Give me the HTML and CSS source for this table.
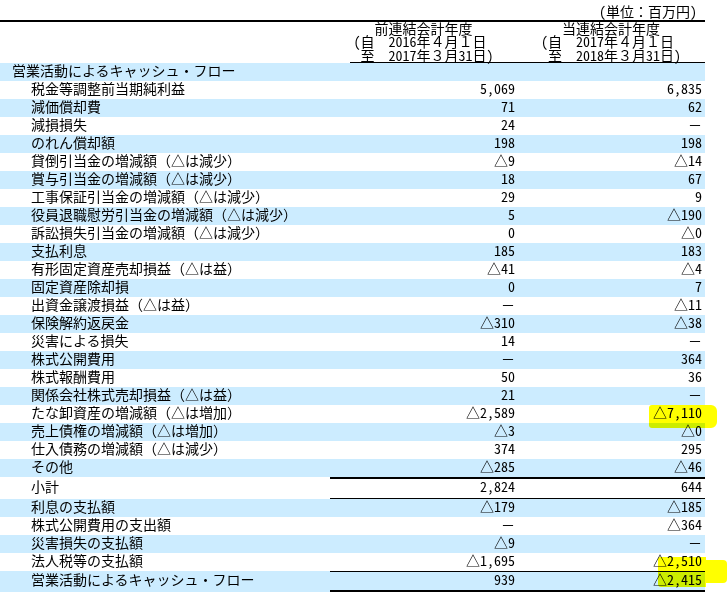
FILE: index.html
```html
<!DOCTYPE html>
<html lang="ja">
<head>
<meta charset="utf-8">
<title>連結キャッシュ・フロー計算書</title>
<link rel="stylesheet" href="styles.css">
</head>
<body>
<div class="page">
  <div class="unit"><span class="hw">(</span>単位：百万円<span class="hw">)</span></div>
  <div class="sheet">
    <div class="head">
      <div class="head-label"></div>
      <div class="head-col prev">
        <div class="period-title">前連結会計年度</div>
        <div class="period">
          <div><span class="hw">(</span>自　<span class="hw">2016</span>年４月１日</div>
          <div class="to">至　<span class="hw">2017</span>年３月<span class="hw">31</span>日<span class="hw">)</span></div>
        </div>
      </div>
      <div class="head-col curr">
        <div class="period-title">当連結会計年度</div>
        <div class="period">
          <div><span class="hw">(</span>自　<span class="hw">2017</span>年４月１日</div>
          <div class="to">至　<span class="hw">2018</span>年３月<span class="hw">31</span>日<span class="hw">)</span></div>
        </div>
      </div>
    </div>

    <div class="row blue section"><div class="label">営業活動によるキャッシュ・フロー</div><div class="num c1"></div><div class="num c2"></div></div>
    <div class="row"><div class="label">税金等調整前当期純利益</div><div class="num c1">5,069</div><div class="num c2">6,835</div></div>
    <div class="row blue"><div class="label">減価償却費</div><div class="num c1">71</div><div class="num c2">62</div></div>
    <div class="row"><div class="label">減損損失</div><div class="num c1">24</div><div class="num c2 dash">－</div></div>
    <div class="row blue"><div class="label">のれん償却額</div><div class="num c1">198</div><div class="num c2">198</div></div>
    <div class="row"><div class="label">貸倒引当金の増減額（△は減少）</div><div class="num c1">△9</div><div class="num c2">△14</div></div>
    <div class="row blue"><div class="label">賞与引当金の増減額（△は減少）</div><div class="num c1">18</div><div class="num c2">67</div></div>
    <div class="row"><div class="label">工事保証引当金の増減額（△は減少）</div><div class="num c1">29</div><div class="num c2">9</div></div>
    <div class="row blue"><div class="label">役員退職慰労引当金の増減額（△は減少）</div><div class="num c1">5</div><div class="num c2">△190</div></div>
    <div class="row"><div class="label">訴訟損失引当金の増減額（△は減少）</div><div class="num c1">0</div><div class="num c2">△0</div></div>
    <div class="row blue"><div class="label">支払利息</div><div class="num c1">185</div><div class="num c2">183</div></div>
    <div class="row"><div class="label">有形固定資産売却損益（△は益）</div><div class="num c1">△41</div><div class="num c2">△4</div></div>
    <div class="row blue"><div class="label">固定資産除却損</div><div class="num c1">0</div><div class="num c2">7</div></div>
    <div class="row"><div class="label">出資金譲渡損益（△は益）</div><div class="num c1 dash">－</div><div class="num c2">△11</div></div>
    <div class="row blue"><div class="label">保険解約返戻金</div><div class="num c1">△310</div><div class="num c2">△38</div></div>
    <div class="row"><div class="label">災害による損失</div><div class="num c1">14</div><div class="num c2 dash">－</div></div>
    <div class="row blue"><div class="label">株式公開費用</div><div class="num c1 dash">－</div><div class="num c2">364</div></div>
    <div class="row"><div class="label">株式報酬費用</div><div class="num c1">50</div><div class="num c2">36</div></div>
    <div class="row blue"><div class="label">関係会社株式売却損益（△は益）</div><div class="num c1">21</div><div class="num c2 dash">－</div></div>
    <div class="row"><div class="label">たな卸資産の増減額（△は増加）</div><div class="num c1">△2,589</div><div class="num c2">△7,110</div></div>
    <div class="row blue"><div class="label">売上債権の増減額（△は増加）</div><div class="num c1">△3</div><div class="num c2">△0</div></div>
    <div class="row"><div class="label">仕入債務の増減額（△は減少）</div><div class="num c1">374</div><div class="num c2">295</div></div>
    <div class="row blue"><div class="label">その他</div><div class="num c1">△285</div><div class="num c2">△46</div></div>
    <div class="row subtotal"><div class="label">小計</div><div class="num c1">2,824</div><div class="num c2">644</div></div>
    <div class="row blue"><div class="label">利息の支払額</div><div class="num c1">△179</div><div class="num c2">△185</div></div>
    <div class="row"><div class="label">株式公開費用の支出額</div><div class="num c1 dash">－</div><div class="num c2">△364</div></div>
    <div class="row blue"><div class="label">災害損失の支払額</div><div class="num c1">△9</div><div class="num c2 dash">－</div></div>
    <div class="row"><div class="label">法人税等の支払額</div><div class="num c1">△1,695</div><div class="num c2">△2,510</div></div>
    <div class="row blue total"><div class="label">営業活動によるキャッシュ・フロー</div><div class="num c1">939</div><div class="num c2">△2,415</div></div>
    <div class="row section"><div class="label">投資活動によるキャッシュ・フロー</div><div class="num c1"></div><div class="num c2"></div></div>
  </div>

  <div class="mark mark-a"></div>
  <div class="mark mark-b1"></div>
  <div class="mark mark-b2"></div>
</div>
</body>
</html>
```

FILE: styles.css
```css
html, body {
  margin: 0;
  padding: 0;
  overflow: hidden;
  background: #fff;
}

body {
  font-family: "Noto Sans CJK JP", "Noto Sans", sans-serif;
  font-size: 14px;
  color: #000;
}

*, *::before, *::after {
  box-sizing: border-box;
}

.page {
  position: relative;
  width: 727px;
}

.hw {
  font-feature-settings: "hwid" 1;
}

.unit {
  width: 705px;
  height: 20px;
  padding: 4px 8px 0 0;
  line-height: 14px;
  text-align: right;
}

.sheet {
  width: 705px;
  border-top: 2px solid #000;
}

/* header */
.head {
  display: grid;
  grid-template-columns: 330px 187px 188px;
  height: 41px;
}

.head-col {
  height: 41px;
  line-height: 13.3px;
  display: flex;
  flex-direction: column;
  align-items: center;
}

.head-col.curr {
  border-bottom: 1px solid #000;
}

.head-col.prev {
  background: linear-gradient(#000, #000) right bottom / calc(100% - 20px) 1px no-repeat;
}

.period {
  text-align: left;
  white-space: nowrap;
}

.period .to {
  padding-left: 7px;
}

/* body rows */
.row {
  display: grid;
  grid-template-columns: 330px 187px 188px;
}

.row > div {
  height: 18px;
  line-height: 15px;
  white-space: nowrap;
}

.row.blue {
  background: #ccecff;
}

.label {
  padding-left: 31px;
}

.row.section .label {
  padding-left: 12px;
}

.num {
  text-align: right;
  font-feature-settings: "hwid" 1;
}

.num.dash {
  font-feature-settings: normal;
}

.num.c1 {
  padding-right: 2px;
}

.num.c2 {
  padding-right: 3px;
}

.row.subtotal > div {
  height: 22px;
  padding-top: 2px;
  padding-bottom: 1px;
}

.row.subtotal > .num {
  padding-top: 0;
  padding-bottom: 0;
  border-top: 2px solid #000;
  border-bottom: 1px solid #000;
}

.row.total > div {
  height: 21px;
  padding-top: 1px;
  padding-bottom: 2px;
}

.row.total > .num {
  padding-top: 0;
  padding-bottom: 0;
  border-top: 1px solid #000;
  border-bottom: 2px solid #000;
}

/* highlighter marks laid over the table */
.mark {
  position: absolute;
  background: #ffff00;
  mix-blend-mode: multiply;
}

.mark-a {
  left: 649px;
  top: 405px;
  width: 68px;
  height: 23px;
  border-radius: 3px 6px 6px 3px;
}

.mark-b1 {
  left: 658px;
  top: 557px;
  width: 48px;
  height: 30px;
  border-radius: 2px 0 0 3px;
}

.mark-b2 {
  left: 704px;
  top: 560px;
  width: 23px;
  height: 23px;
  border-radius: 0 4px 4px 0;
}
```
